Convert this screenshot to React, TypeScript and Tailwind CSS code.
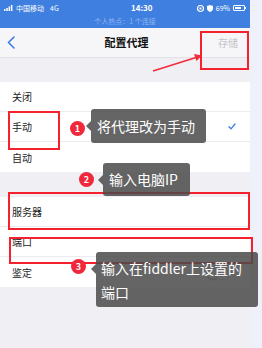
import React from "react";

const font = { fontFamily: '"Noto Sans CJK SC", "Noto Sans", sans-serif' };

function StatusBar() {
  return (
    <div className="h-[28px] bg-[#3f7fe0] px-[4px] text-white">
      <div className="flex h-[16px] items-center justify-between text-[7px] leading-none">
        <div className="flex items-center gap-[3px]">
          <svg width="9" height="6" viewBox="0 0 9 6">
            <rect x="0" y="4" width="1.5" height="2" fill="white" />
            <rect x="2.3" y="3" width="1.5" height="3" fill="white" />
            <rect x="4.6" y="1.5" width="1.5" height="4.5" fill="white" />
            <rect x="6.9" y="0" width="1.5" height="6" fill="white" />
          </svg>
          <span>中国移动</span>
          <span className="ml-[3px]">4G</span>
        </div>
        <span className="ml-[28px] text-[8px] font-semibold">14:30</span>
        <div className="flex items-center gap-[3px]">
          <svg width="7" height="7" viewBox="0 0 7 7">
            <circle cx="3.5" cy="3.5" r="3" fill="none" stroke="white" strokeWidth="1.2" />
            <rect x="2.5" y="2.5" width="2" height="2" fill="white" />
          </svg>
          <svg width="6" height="7" viewBox="0 0 6 7">
            <path d="M3 0 L6 1 V3.5 C6 5.5 4.5 6.5 3 7 C1.5 6.5 0 5.5 0 3.5 V1 Z" fill="white" />
          </svg>
          <span>69%</span>
          <div className="flex items-center">
            <div className="h-[6px] w-[12px] rounded-[1px] border border-white p-[1px]">
              <div className="h-full w-[70%] bg-white" />
            </div>
            <div className="h-[2px] w-[1px] bg-white" />
          </div>
        </div>
      </div>
      <div className="flex h-[10px] items-center justify-center text-[7px] leading-none text-[#8fb6f0]">
        个人热点：1 个连接
      </div>
    </div>
  );
}

function Row({ label, children, border = true }: { label: string; children?: React.ReactNode; border?: boolean }) {
  return (
    <div className={`flex h-[30px] items-center justify-between pl-[12px] pr-[14px] ${border ? "border-b border-[#ececee]" : ""}`}>
      <span className="text-[10px] text-[#222]">{label}</span>
      {children}
    </div>
  );
}

function Badge({ n }: { n: number }) {
  return (
    <div className="flex h-[15px] w-[15px] items-center justify-center rounded-full bg-[#f0283c] text-[9px] font-bold leading-none text-white">
      {n}
    </div>
  );
}

function Bubble({ children, className }: { children: React.ReactNode; className: string }) {
  return (
    <div className={`absolute rounded-[3px] bg-[#4a4a4a]/85 text-[14px] leading-[24px] text-white ${className}`}>
      <div className="absolute left-[-5px] top-[12px] h-0 w-0 border-y-[5px] border-r-[5px] border-y-transparent border-r-[#4a4a4a]/85" />
      {children}
    </div>
  );
}

export default function App() {
  return (
    <div className="relative flex h-[348px] w-[262px] overflow-hidden bg-[#eef1f9]" style={font}>
      <div className="flex w-[250px] flex-col bg-[#efeff4]">
        <StatusBar />
        <div className="flex h-[30px] items-center justify-between border-b border-[#e2e2e6] bg-[#f6f6f8] pl-[7px] pr-[12px]">
          <svg width="8" height="13" viewBox="0 0 8 13">
            <path d="M7 1 L1.5 6.5 L7 12" fill="none" stroke="#3a7de8" strokeWidth="1.6" strokeLinecap="round" strokeLinejoin="round" />
          </svg>
          <span className="ml-[20px] text-[11px] font-bold text-[#111]">配置代理</span>
          <span className="text-[10px] text-[#c4c4c8]">存储</span>
        </div>
        <div className="h-[24px]" />
        <div className="bg-white">
          <Row label="关闭" />
          <Row label="手动">
            <svg width="8" height="7" viewBox="0 0 8 7">
              <path d="M1 3.8 L3 5.8 L7 1" fill="none" stroke="#3a7de8" strokeWidth="1.3" strokeLinecap="round" strokeLinejoin="round" />
            </svg>
          </Row>
          <Row label="自动" border={false} />
        </div>
        <div className="h-[25px]" />
        <div className="bg-white">
          <Row label="服务器" />
          <Row label="端口" />
          <Row label="鉴定" border={false}>
            <div className="mr-[4px] h-[16px] w-[28px] rounded-full border border-[#d8d8d8] bg-white p-[1px]">
              <div className="h-[13px] w-[13px] rounded-full border border-[#cfcfcf] bg-white shadow-[0_1px_2px_rgba(0,0,0,0.35)]" />
            </div>
          </Row>
        </div>
      </div>

      {/* annotations */}
      <svg className="absolute left-0 top-0" width="262" height="348" viewBox="0 0 262 348">
        <line x1="153" y1="71" x2="196" y2="57.5" stroke="#f22c3a" strokeWidth="1.6" />
        <path d="M202 55.5 L194 54 L196.5 61 Z" fill="#f22c3a" />
      </svg>
      <div className="absolute left-[200px] top-[31px] h-[39px] w-[49px] border-2 border-[#f5222d]" />
      <div className="absolute left-[8px] top-[111px] h-[39px] w-[52px] border-2 border-[#f5222d]" />
      <div className="absolute left-[8px] top-[192px] h-[38px] w-[242px] border-2 border-[#f5222d]" />
      <div className="absolute left-[9px] top-[237px] h-[27px] w-[244px] border-2 border-[#f5222d]" />

      <div className="absolute left-[70px] top-[121px]"><Badge n={1} /></div>
      <Bubble className="left-[91px] top-[109px] h-[34px] w-[115px] px-[6px] py-[5px]">将代理改为手动</Bubble>

      <div className="absolute left-[79px] top-[172px]"><Badge n={2} /></div>
      <Bubble className="left-[103px] top-[163px] h-[33px] w-[87px] px-[6px] py-[4px]">输入电脑IP</Bubble>

      <div className="absolute left-[71px] top-[259px]"><Badge n={3} /></div>
      <Bubble className="left-[96px] top-[252px] h-[55px] w-[162px] px-[5px] py-[4px]">
        <div>输入在fiddler上设置的</div>
        <div>端口</div>
      </Bubble>
    </div>
  );
}
